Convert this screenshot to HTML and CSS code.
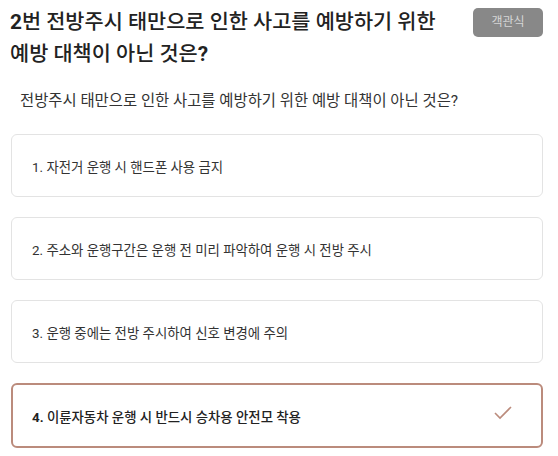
FILE: index.html
```html
<!DOCTYPE html>
<html lang="ko">
<head>
<meta charset="utf-8">
<link rel="stylesheet" href="styles.css">
</head>
<body>
<div class="page">
  <div class="header">
    <h1 class="title"><b class="num">2</b>번 전방주시 태만으로 인한 사고를 예방하기 위한 예방 대책이 아닌 것은<b class="num">?</b></h1>
    <span class="badge">객관식</span>
  </div>
  <p class="question">전방주시 태만으로 인한 사고를 예방하기 위한 예방 대책이 아닌 것은?</p>
  <ul class="options">
    <li class="option">1. 자전거 운행 시 핸드폰 사용 금지</li>
    <li class="option">2. 주소와 운행구간은 운행 전 미리 파악하여 운행 시 전방 주시</li>
    <li class="option">3. 운행 중에는 전방 주시하여 신호 변경에 주의</li>
    <li class="option selected"><span><b class="num">4.</b> 이륜자동차 운행 시 반드시 승차용 안전모 착용</span>
      <svg class="check" width="18" height="14" viewBox="0 0 18 14"><path d="M1 7 L6 12 L17 1" fill="none" stroke="#bb8b7c" stroke-width="1.6"/></svg>
    </li>
  </ul>
</div>
</body>
</html>
```

FILE: styles.css
```css
* { box-sizing: border-box; }
html, body { margin: 0; padding: 0; background: #fff; }
body {
  font-family: Roboto, "Noto Sans CJK KR", sans-serif;
  color: #333;
  word-break: keep-all;
}
.page {
  padding: 8px 15px 0 11px;
}
.header {
  display: flex;
  justify-content: space-between;
  align-items: flex-start;
}
.title {
  margin: -2px 0 0 -1px;
  font-size: 20.8px;
  line-height: 32px;
  font-weight: 500;
  color: #222;
  max-width: 440px;
}
.num { font-weight: 700; display: inline-block; }
.badge {
  flex: none;
  width: 70px;
  height: 29px;
  background: #888;
  color: #d6d6d6;
  font-size: 12px;
  line-height: 29px;
  text-align: center;
  border-radius: 5px;
}
.question {
  margin: 21px 0 0 9px;
  font-size: 15.4px;
  line-height: 20px;
  color: #333;
}
.options {
  list-style: none;
  margin: 23px 0 0 0;
  padding: 0;
  display: flex;
  flex-direction: column;
  gap: 20px;
}
.option {
  height: 63px;
  border: 1px solid #e3e3e3;
  border-radius: 6px;
  padding: 0 29px 0 20px;
  display: flex;
  align-items: center;
  justify-content: space-between;
  font-size: 13.4px;
  color: #333;
}
.option.selected {
  height: 65px;
  border: 2px solid #bb8b7c;
  padding-left: 19px;
  font-weight: 500;
  color: #222;
}
.check { display: block; margin-top: -6px; }
```
